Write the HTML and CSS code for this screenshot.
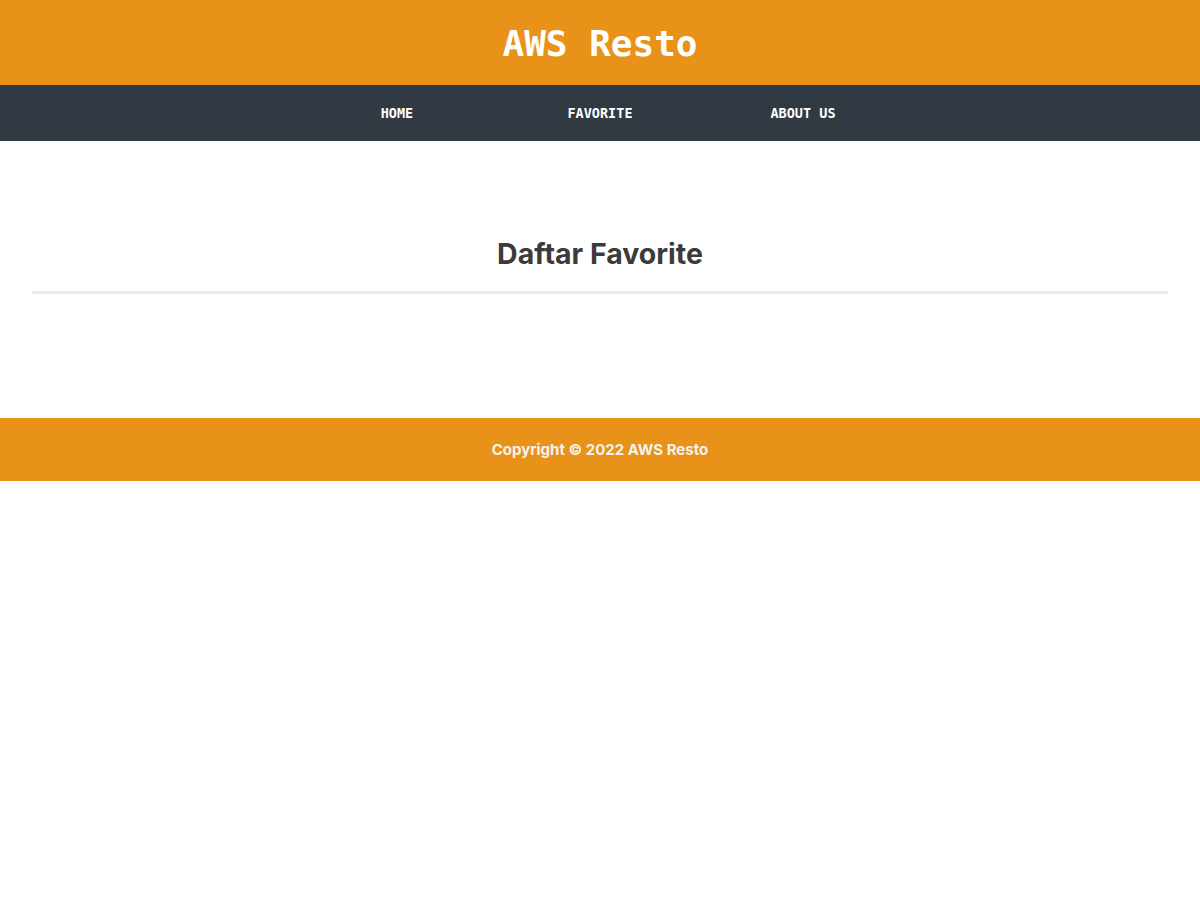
FILE: index.html
```html
<!DOCTYPE html>
<html lang="id">
<head>
<meta charset="utf-8">
<title>AWS Resto</title>
<link rel="stylesheet" href="styles.css">
</head>
<body>
<header class="app-bar">
  <h1 class="app-title">AWS Resto</h1>
</header>
<nav class="nav">
  <ul class="nav-list">
    <li class="nav-item"><a href="#">HOME</a></li>
    <li class="nav-item"><a href="#">FAVORITE</a></li>
    <li class="nav-item"><a href="#">ABOUT US</a></li>
  </ul>
</nav>
<main class="content">
  <h2 class="content-title">Daftar Favorite</h2>
  <div class="resto-list"></div>
</main>
<footer class="footer">
  <p>Copyright © 2022 AWS Resto</p>
</footer>
</body>
</html>
```
FILE: styles.css
```css
* { box-sizing: border-box; }
html, body { margin: 0; padding: 0; background: #fff; }
body { font-family: "Inter", "Noto Sans", sans-serif; }

.app-bar {
  background: #e9921a;
  height: 85px;
  display: flex;
  align-items: center;
  justify-content: center;
  padding-top: 3px;
}
.app-title {
  margin: 0;
  font-family: "DejaVu Sans Mono", monospace;
  font-weight: bold;
  font-size: 36px;
  color: #fff;
  line-height: 1;
}

.nav {
  background: #313943;
  height: 56px;
  display: flex;
  align-items: center;
  justify-content: center;
  padding-bottom: 2px;
}
.nav-list {
  list-style: none;
  margin: 0;
  padding: 0;
  display: flex;
}
.nav-item {
  width: 203px;
  text-align: center;
  line-height: 1;
}
.nav-item a {
  color: #fff;
  text-decoration: none;
  font-family: "DejaVu Sans Mono", monospace;
  font-size: 13.5px;
  font-weight: 600;
}

.content {
  padding: 91px 32px 0;
}
.content-title {
  margin: 0;
  text-align: center;
  font-size: 28.5px;
  line-height: 44px;
  font-weight: 700;
  color: #3b3b3b;
  padding-bottom: 15px;
  border-bottom: 3px solid #ebebeb;
}
.resto-list {
  height: 124px;
}

.footer {
  background: #e9921a;
  height: 63px;
  display: flex;
  align-items: center;
  justify-content: center;
}
.footer p {
  margin: 0;
  color: #f2f2f2;
  font-size: 15px;
  font-weight: 700;
}
```
